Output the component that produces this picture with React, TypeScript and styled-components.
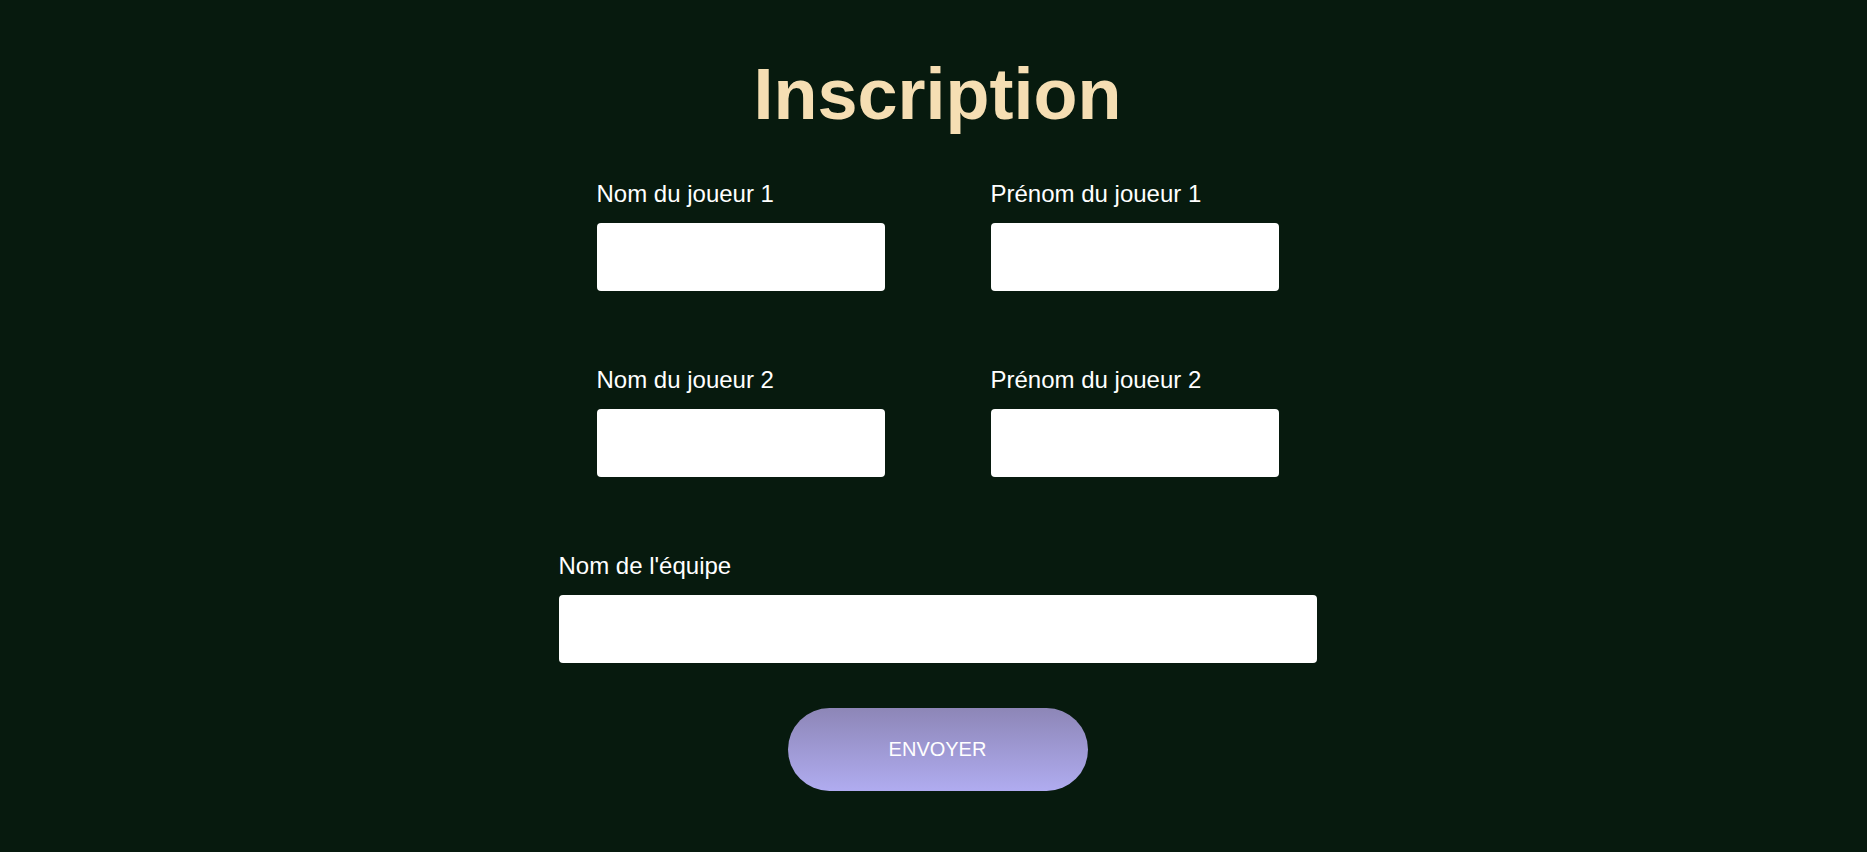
import React from "react";
import styled, { createGlobalStyle } from "styled-components";

const GlobalStyle = createGlobalStyle`
  html, body {
    margin: 0;
    padding: 0;
    background: #071a0e;
  }
  body {
    font-family: "Liberation Sans", Arial, sans-serif;
  }
  * { box-sizing: border-box; }
`;

const Page = styled.main`
  min-height: 852px;
  background: #071a0e;
  padding: 58px 0 0 8px;
  display: flex;
  flex-direction: column;
  align-items: center;
`;

const Title = styled.h1`
  margin: 0;
  font-family: "Liberation Sans", Arial, sans-serif;
  font-weight: 700;
  font-size: 72px;
  line-height: 72px;
  color: #f5deb3;
`;

const Form = styled.form`
  margin-top: 50px;
  display: flex;
  flex-direction: column;
  align-items: center;
`;

const PlayerGrid = styled.div`
  display: grid;
  grid-template-columns: 288px 288px;
  column-gap: 106px;
  row-gap: 75px;
`;

const Field = styled.label<{ $wide?: boolean }>`
  display: flex;
  flex-direction: column;
  gap: 15px;
  width: ${(p) => (p.$wide ? "758px" : "288px")};
  margin-top: ${(p) => (p.$wide ? "75px" : "0")};
`;

const LabelText = styled.span`
  font-size: 24px;
  line-height: 28px;
  color: #ffffff;
`;

const Input = styled.input`
  width: 100%;
  height: 68px;
  border: none;
  border-radius: 4px;
  background: #ffffff;
  padding: 0 12px;
  font-family: "Liberation Sans", Arial, sans-serif;
  font-size: 20px;
  outline: none;
`;

const SubmitButton = styled.button`
  margin-top: 45px;
  width: 300px;
  height: 83px;
  border: none;
  border-radius: 42px;
  background: linear-gradient(180deg, #8d86b7 0%, #b0acf0 100%);
  color: #ffffff;
  font-family: "Liberation Sans", Arial, sans-serif;
  font-size: 20px;
  letter-spacing: 0;
  cursor: pointer;
`;

const players = [1, 2];

export default function App() {
  return (
    <>
      <GlobalStyle />
      <Page>
        <Title>Inscription</Title>
        <Form onSubmit={(e) => e.preventDefault()}>
          <PlayerGrid>
            {players.map((n) => (
              <React.Fragment key={n}>
                <Field>
                  <LabelText>Nom du joueur {n}</LabelText>
                  <Input type="text" />
                </Field>
                <Field>
                  <LabelText>Prénom du joueur {n}</LabelText>
                  <Input type="text" />
                </Field>
              </React.Fragment>
            ))}
          </PlayerGrid>
          <Field $wide>
            <LabelText>Nom de l'équipe</LabelText>
            <Input type="text" />
          </Field>
          <SubmitButton type="submit">ENVOYER</SubmitButton>
        </Form>
      </Page>
    </>
  );
}
